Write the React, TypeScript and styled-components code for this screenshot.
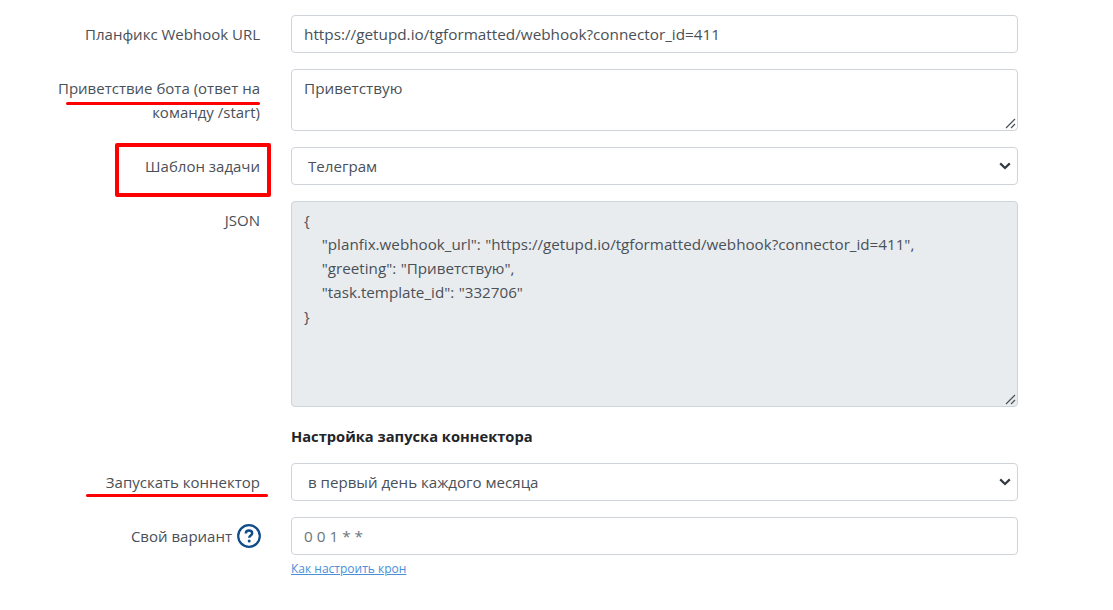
import React from 'react';
import styled, { createGlobalStyle } from 'styled-components';

const GlobalStyle = createGlobalStyle`
  html, body {
    margin: 0;
    background: #fff;
  }
  body {
    font-family: "Open Sans", "Noto Sans", sans-serif;
    font-size: 15px;
    color: #495057;
  }
`;

const Page = styled.div`
  position: relative;
  width: 1113px;
  height: 610px;
  overflow: hidden;
  padding-top: 15px;
  box-sizing: border-box;
`;

const Row = styled.div<{ $gap?: number }>`
  display: grid;
  grid-template-columns: 260px 727px;
  column-gap: 31px;
  margin-bottom: ${({ $gap = 16 }) => $gap}px;
`;

const Label = styled.label`
  display: flex;
  justify-content: flex-end;
  align-items: center;
  gap: 5px;
  padding: 7px 0 0 30px;
  align-self: start;
  text-align: right;
  line-height: 24px;
  font-size: 15px;
  color: #495057;
`;

const controlBase = `
  display: block;
  width: 100%;
  box-sizing: border-box;
  border: 1px solid #ced4da;
  border-radius: 4px;
  font-family: "Open Sans", "Noto Sans", sans-serif;
  font-size: 15.3px;
  line-height: 24px;
  color: #495057;
  outline: none;
  background-color: #fff;
`;

const Input = styled.input`
  ${controlBase}
  height: 38px;
  padding: 6px 12px;

  &::placeholder {
    color: #6c757d;
    opacity: 1;
  }
`;

const TextArea = styled.textarea<{ $height: number; $disabled?: boolean }>`
  ${controlBase}
  height: ${({ $height }) => $height}px;
  padding: 6px 12px;
  margin: 0;
  white-space: pre-wrap;
  resize: vertical;
  word-spacing: ${({ $disabled }) => ($disabled ? '0.5px' : '0')};
  font-size: ${({ $disabled }) => ($disabled ? '15.2px' : '15.3px')};
  background-color: ${({ $disabled }) => ($disabled ? '#e9ecef' : '#fff')};

  &::-webkit-resizer {
    background: url("data:image/svg+xml,%3Csvg xmlns='http://www.w3.org/2000/svg' width='15' height='15' viewBox='0 0 15 15'%3E%3Cpath d='M4 13 13 4M9 13l4-4' fill='none' stroke='%23495057' stroke-width='1.2'/%3E%3C/svg%3E") no-repeat;
  }
`;

const Select = styled.select`
  ${controlBase}
  height: 38px;
  padding: 6px 28px 6px 16px;
  appearance: none;
  font-size: 15.1px;
  background-image: url("data:image/svg+xml,%3Csvg xmlns='http://www.w3.org/2000/svg' width='12' height='8' viewBox='0 0 12 8'%3E%3Cpath d='M1.2 1.4 6 6l4.8-4.6' fill='none' stroke='%23343a40' stroke-width='2.2'/%3E%3C/svg%3E");
  background-repeat: no-repeat;
  background-position: right 6px center;
`;

const Heading = styled.div`
  grid-column: 2;
  font-size: 14.7px;
  font-weight: 700;
  line-height: 24px;
  color: #212529;
`;

const HelpLink = styled.a`
  display: block;
  margin-top: 4px;
  font-size: 12px;
  line-height: 19px;
  color: #4a90d9;
  text-decoration: underline;
`;

const HelpIcon = styled.svg`
  width: 24px;
  height: 24px;
  flex: none;
  margin-right: -1px;
`;

const Stroke = styled.div<{ $left: number; $top: number; $width: number }>`
  position: absolute;
  left: ${({ $left }) => $left}px;
  top: ${({ $top }) => $top}px;
  width: ${({ $width }) => $width}px;
  height: 3px;
  border-radius: 2px;
  background: #fe0000;
`;

const RedBox = styled.div`
  position: absolute;
  left: 115px;
  top: 143px;
  width: 156px;
  height: 54px;
  box-sizing: border-box;
  border: 4px solid #fe0000;
  border-radius: 2px;
`;

const json = `{
    "planfix.webhook_url": "https://getupd.io/tgformatted/webhook?connector_id=411",
    "greeting": "Приветствую",
    "task.template_id": "332706"
}`;

export default function App() {
  return (
    <Page>
      <GlobalStyle />
      <Row>
        <Label>Планфикс Webhook URL</Label>
        <Input readOnly value="https://getupd.io/tgformatted/webhook?connector_id=411" />
      </Row>
      <Row>
        <Label>Приветствие бота (ответ на команду /start)</Label>
        <TextArea $height={62} readOnly value="Приветствую" />
      </Row>
      <Row>
        <Label>Шаблон задачи</Label>
        <Select defaultValue="tg">
          <option value="tg">Телеграм</option>
        </Select>
      </Row>
      <Row $gap={17}>
        <Label>JSON</Label>
        <TextArea $height={206} $disabled readOnly value={json} />
      </Row>
      <Row $gap={15}>
        <Heading>Настройка запуска коннектора</Heading>
      </Row>
      <Row>
        <Label>Запускать коннектор</Label>
        <Select defaultValue="month">
          <option value="month">в первый день каждого месяца</option>
        </Select>
      </Row>
      <Row>
        <Label>
          Свой вариант
          <HelpIcon viewBox="0 0 24 24" fill="none">
            <circle cx="12" cy="12" r="10.8" stroke="#0f4c8a" strokeWidth="2.2" />
            <path d="M8.8 9.6c0-2 1.4-3.1 3.2-3.1s3.2 1 3.2 2.8c0 2.2-3 2.3-3 4.5" stroke="#0f4c8a" strokeWidth="2.4" />
            <circle cx="12.2" cy="17.1" r="1.5" fill="#0f4c8a" />
          </HelpIcon>
        </Label>
        <div>
          <Input readOnly placeholder="0 0 1 * *" />
          <HelpLink href="#">Как настроить крон</HelpLink>
        </div>
      </Row>
      <Stroke $left={66} $top={102} $width={194} />
      <RedBox />
      <Stroke $left={86} $top={494} $width={182} />
    </Page>
  );
}
